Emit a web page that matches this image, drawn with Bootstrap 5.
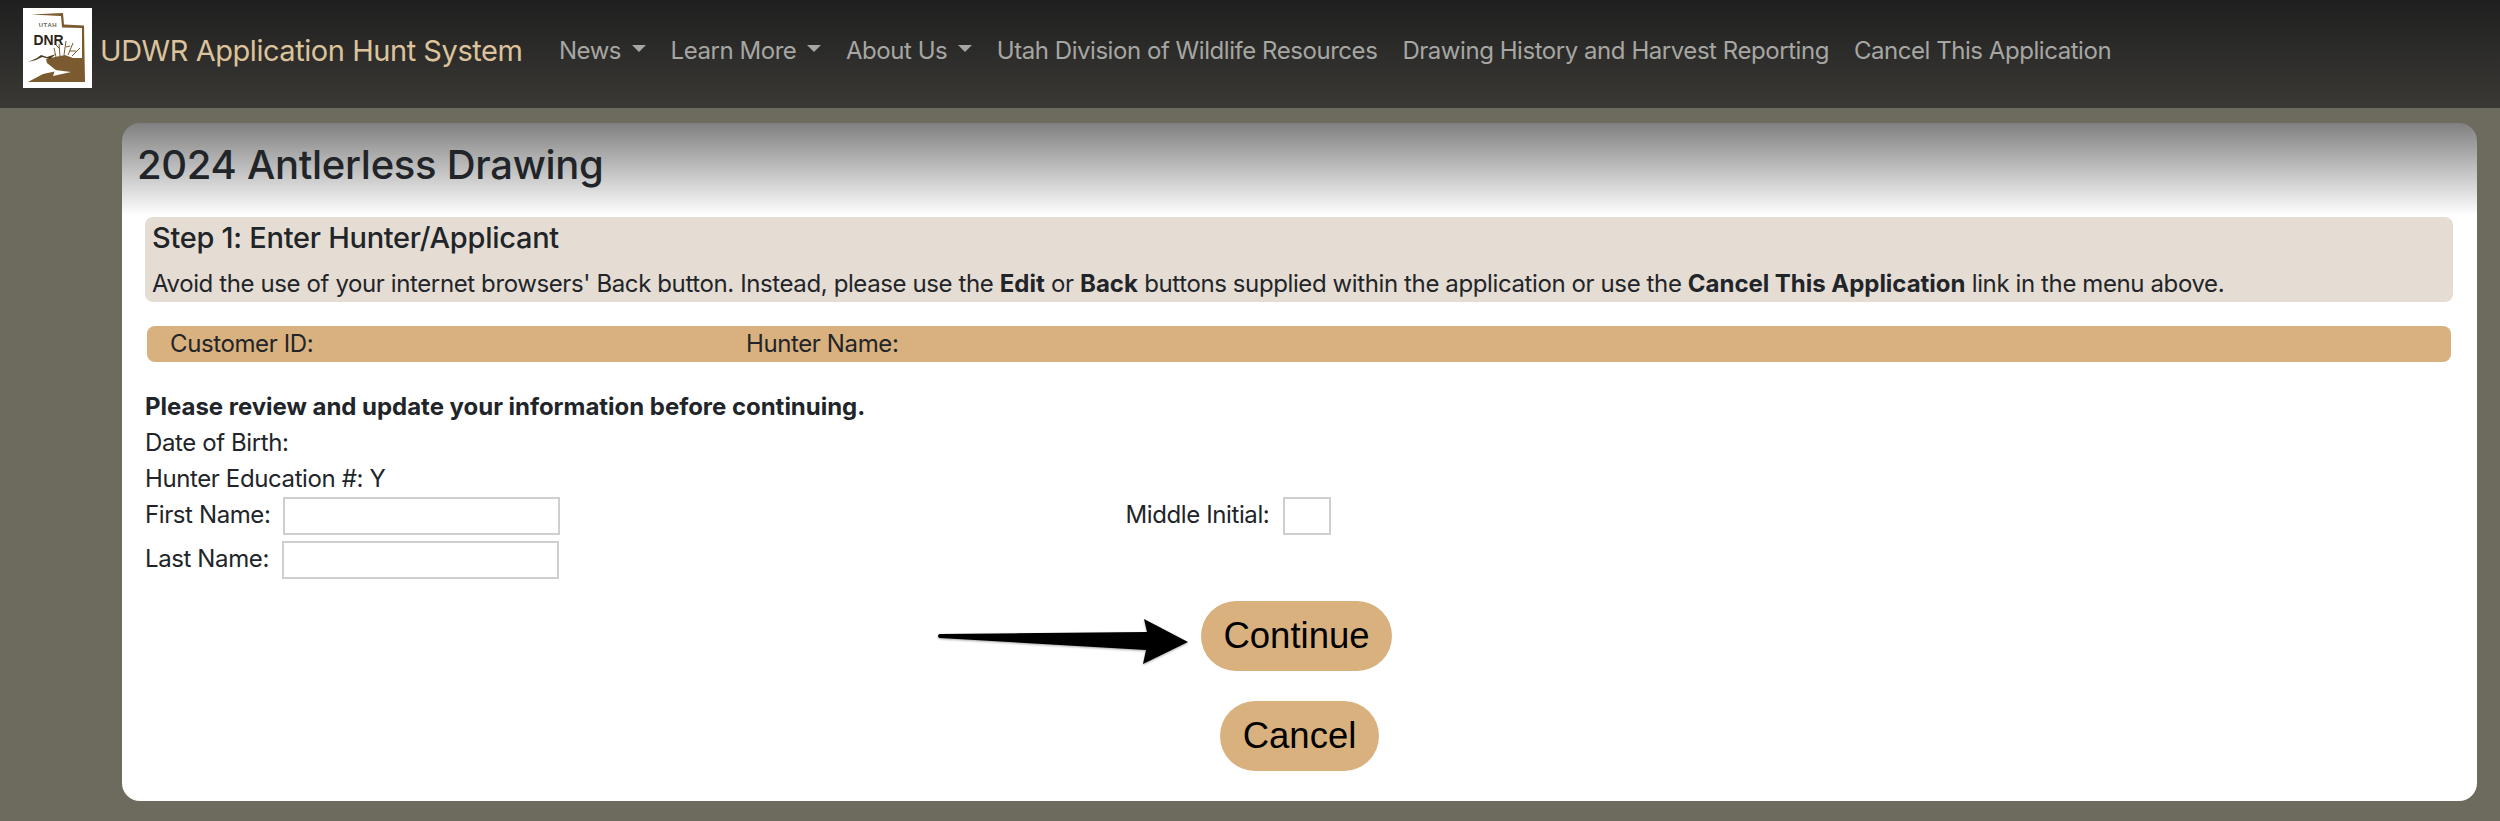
<!DOCTYPE html>
<html lang="en">
<head>
    <meta charset="UTF-8">
    <meta name="viewport" content="width=device-width, initial-scale=1.0">
    <title>UDWR Application Hunt System</title>
    <link href="https://cdn.jsdelivr.net/npm/bootstrap@5.3.3/dist/css/bootstrap.min.css" rel="stylesheet">
    <style>
        body { background: #6d6b5e; font-family: Inter, "Liberation Sans", sans-serif; font-size: 24px; letter-spacing: -.39px; color: #212529; line-height: 36px; min-height: 821px; }
        b, .fw-bold { letter-spacing: -.03px; }
        .hunt-nav { --bs-navbar-nav-link-padding-x: 12.5px; height: 108px; padding: 0 0 0 23px; background: linear-gradient(#1f1f1f, #3a3935); align-items: center; }
        .hunt-nav .navbar-brand { display: flex; align-items: center; padding: 0 0 7px; margin-right: 24px; font-size: 29px; letter-spacing: -.45px; line-height: 40px; color: #dcc39c; }
        .hunt-logo { width: 69px; height: 80px; margin: 0 8px 6px 0; background: #fff; display: block; }
        .hunt-nav .nav-link { font-size: 24px; letter-spacing: -.45px; line-height: 36px; color: #a6a6a3; padding-top: 0; padding-bottom: 0; margin-bottom: 7px; }
        .dropdown-toggle::after { margin-left: 10.5px; }
        .hunt-panel { margin: 15px 23px 0 122px; height: 678px; background: linear-gradient(#808080 0, #fff 93px); background-color: #fff; border-radius: 18px; padding: 0 24px 0 23px; }
        .hunt-title { font-size: 40px; letter-spacing: -.3px; line-height: 50px; font-weight: 500; height: 94px; margin: 0 0 0 -8px; padding-top: 17px; }
        .step-box { background: #e5ddd4; border-radius: 8px; padding: 0 7px; height: 85px; }
        .step-box h2 { font-size: 29px; letter-spacing: -.28px; line-height: 40px; font-weight: 500; margin: 0; padding-top: 1px; }
        .step-box p { margin: 8px 0 0; line-height: 36px; }
        .cust-bar { background: #d9b17e; border-radius: 8px; height: 36px; line-height: 36px; margin: 24px 2px 0; padding-left: 23px; }
        .cust-id { width: 576px; }
        .review-block { margin-top: 27px; }
        .form-line { height: 36px; }
        .hunt-input { height: 38px; border: 2px solid #cfcfcf; background: #fff; padding: 0; display: block; }
        .name-input { width: 277px; margin-left: 13px; }
        .mi-wrap { margin-left: 565px; }
        .mi-input { width: 48px; margin-left: 14px; }
        .last-line { margin-top: 8px; }
        .hunt-btn { background: #d9b17e; border: 0; border-radius: 35px; color: #000; font-family: "Liberation Sans", Arial, sans-serif; font-size: 36.5px; letter-spacing: 0; line-height: 70px; height: 70px; padding: 0; display: block; }
        .btn-stack { margin-top: 24px; }
        .continue-btn { width: 191px; margin-left: 1056px; }
        .cancel-btn { width: 159px; margin: 30px 0 0 1075px; }
        .continue-wrap { position: relative; }
        .hunt-arrow { position: absolute; left: 793px; top: 14px; width: 256px; height: 52px; filter: drop-shadow(0 1px 1px rgba(0,0,0,.35)); }
    </style>
</head>

<body>
    <nav class="navbar navbar-expand hunt-nav">
        <a class="navbar-brand" href="#">
            <svg class="hunt-logo" viewBox="0 0 69 80">
                <path d="M8 6.5 L40 5 L41 16.5 L61 17.5 L62 74 L5 74 L20 66 L34 63 L24 55 L23 51 L32 49 L42 47 L50 50 L59 50 L59 20 L39 19.5 L38 8 Z" fill="#7a5a2e"/>
                <path d="M32 62 L48 64 L30 68 Z" fill="#fff"/>
                <path d="M5 54 L14 50 L18 47 L24 49 L33 46 L27 51 L19 49 L13 52 Z" fill="#4d3b20"/>
                <path d="M33 49 L31 40 M37 48 L36 36 M41 47 L43 33 M45 47 L50 35 M49 48 L57 40 M37 41 L33 37 M43 39 L47 38 M47 43 L53 43" stroke="#7a5a2e" stroke-width="1" fill="none"/>
                <text x="25" y="19" text-anchor="middle" font-family="Liberation Sans, sans-serif" font-size="6" font-weight="700" letter-spacing=".6" fill="#6e6656">UTAH</text>
                <text x="25.5" y="37" text-anchor="middle" font-family="Liberation Sans, sans-serif" font-size="15" font-weight="700" letter-spacing="0" fill="#2b2415" textLength="30" lengthAdjust="spacingAndGlyphs">DNR</text>
            </svg>
            UDWR Application Hunt System
        </a>
        <ul class="navbar-nav">
            <li class="nav-item dropdown"><a class="nav-link dropdown-toggle" href="#" data-bs-toggle="dropdown">News</a></li>
            <li class="nav-item dropdown"><a class="nav-link dropdown-toggle" href="#" data-bs-toggle="dropdown">Learn More</a></li>
            <li class="nav-item dropdown"><a class="nav-link dropdown-toggle" href="#" data-bs-toggle="dropdown">About Us</a></li>
            <li class="nav-item"><a class="nav-link" href="#">Utah Division of Wildlife Resources</a></li>
            <li class="nav-item"><a class="nav-link" href="#">Drawing History and Harvest Reporting</a></li>
            <li class="nav-item"><a class="nav-link" href="#">Cancel This Application</a></li>
        </ul>
    </nav>

    <div class="hunt-panel">
        <h1 class="hunt-title">2024 Antlerless Drawing</h1>
        <div class="step-box">
            <h2>Step 1: Enter Hunter/Applicant</h2>
            <p>Avoid the use of your internet browsers' Back button. Instead, please use the <b>Edit</b> or <b>Back</b> buttons supplied within the application or use the <b>Cancel This Application</b> link in the menu above.</p>
        </div>
        <div class="cust-bar d-flex">
            <div class="cust-id">Customer ID:</div>
            <div>Hunter Name:</div>
        </div>
        <div class="review-block">
            <div class="form-line fw-bold">Please review and update your information before continuing.</div>
            <div class="form-line">Date of Birth:</div>
            <div class="form-line">Hunter Education #: Y</div>
            <div class="d-flex form-line">
                <span>First Name:</span>
                <input class="hunt-input name-input" type="text">
                <div class="d-flex mi-wrap">
                    <span>Middle Initial:</span>
                    <input class="hunt-input mi-input" type="text">
                </div>
            </div>
            <div class="d-flex form-line last-line">
                <span>Last Name:</span>
                <input class="hunt-input name-input" type="text">
            </div>
        </div>
        <div class="btn-stack">
            <div class="continue-wrap">
                <svg class="hunt-arrow" viewBox="0 0 256 52">
                    <path d="M0 21 Q0 19 2 19 L209 17 L206 4 L250 27 L205 49 L208 35 L2 23 Q0 23 0 21 Z" fill="#000"/>
                </svg>
                <button class="hunt-btn continue-btn" type="button">Continue</button>
            </div>
            <button class="hunt-btn cancel-btn" type="button">Cancel</button>
        </div>
    </div>

    <script src="https://cdn.jsdelivr.net/npm/bootstrap@5.3.3/dist/js/bootstrap.bundle.min.js"></script>
</body>
</html>
